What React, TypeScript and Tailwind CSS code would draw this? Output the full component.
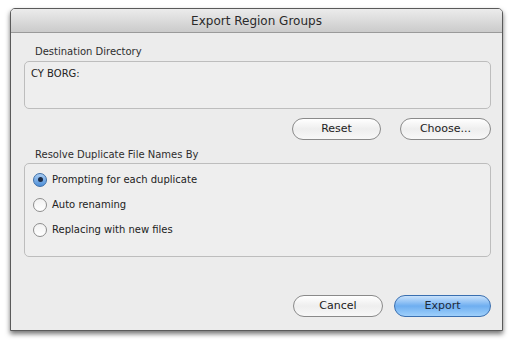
import React from 'react';

const font = { fontFamily: '"DejaVu Sans", "Liberation Sans", sans-serif' };

function Pill({ label, primary = false, w }: { label: string; primary?: boolean; w: string }) {
  return (
    <button
      className={`${w} h-[22px] rounded-full border text-[11px] flex items-center justify-center ${
        primary
          ? 'border-[#3a6fb0] bg-gradient-to-b from-[#c9e2fb] via-[#6eaef0] to-[#9fd0fb] text-[#1e2a3a]'
          : 'border-[#8a8a8a] bg-gradient-to-b from-[#ffffff] via-[#eeeeee] to-[#f8f8f8] text-[#222]'
      }`}
    >
      {label}
    </button>
  );
}

function Radio({ label, on = false }: { label: string; on?: boolean }) {
  return (
    <div className="flex items-center gap-[5px] h-[25px]">
      <span
        className={`w-[14px] h-[14px] rounded-full border flex items-center justify-center ${
          on
            ? 'border-[#3d6fa8] bg-gradient-to-b from-[#a9cdf3] to-[#4d8fd8]'
            : 'border-[#8d8d8d] bg-gradient-to-b from-[#f2f2f2] to-[#ffffff]'
        }`}
      >
        {on && <span className="w-[5px] h-[5px] rounded-full bg-[#1b2a44]" />}
      </span>
      <span className="text-[10px] text-[#222]">{label}</span>
    </div>
  );
}

export default function App() {
  return (
    <div className="w-[512px] h-[340px] bg-white pt-[8px] pl-[10px]" style={font}>
      <div className="w-[493px] h-[323px] flex flex-col bg-[#ececec] border border-[#5a5a5a] rounded-t-[5px] shadow-[0_3px_5px_rgba(0,0,0,0.55)]">
        <div className="h-[24px] shrink-0 rounded-t-[4px] bg-gradient-to-b from-[#ececec] to-[#cbcbcb] border-b border-[#9a9a9a] flex items-center justify-center text-[12px] text-[#2a2a2a]">
          Export Region Groups
        </div>
        <div className="flex flex-col pl-[13px] pr-[11px] pt-[12px]">
          <div className="pl-[11px] text-[10px] text-[#2e2e2e] leading-[14px]">Destination Directory</div>
          <div className="mt-[2px] h-[48px] rounded-[5px] border border-[#bdbdbd] bg-[#eeeeee] px-[6px] pt-[4px] text-[10px] text-[#222]">
            CY BORG:
          </div>
          <div className="flex justify-end gap-[19px] mt-[9px]">
            <Pill label="Reset" w="w-[89px]" />
            <Pill label="Choose..." w="w-[91px]" />
          </div>
          <div className="pl-[11px] mt-[8px] text-[10px] text-[#2e2e2e] leading-[14px]">Resolve Duplicate File Names By</div>
          <div className="mt-[1px] h-[94px] rounded-[5px] border border-[#bdbdbd] bg-[#eeeeee] px-[8px] pt-[3px] flex flex-col">
            <Radio label="Prompting for each duplicate" on />
            <Radio label="Auto renaming" />
            <Radio label="Replacing with new files" />
          </div>
          <div className="flex justify-end gap-[11px] mt-[38px]">
            <Pill label="Cancel" w="w-[90px]" />
            <Pill label="Export" w="w-[97px]" primary />
          </div>
        </div>
      </div>
    </div>
  );
}
